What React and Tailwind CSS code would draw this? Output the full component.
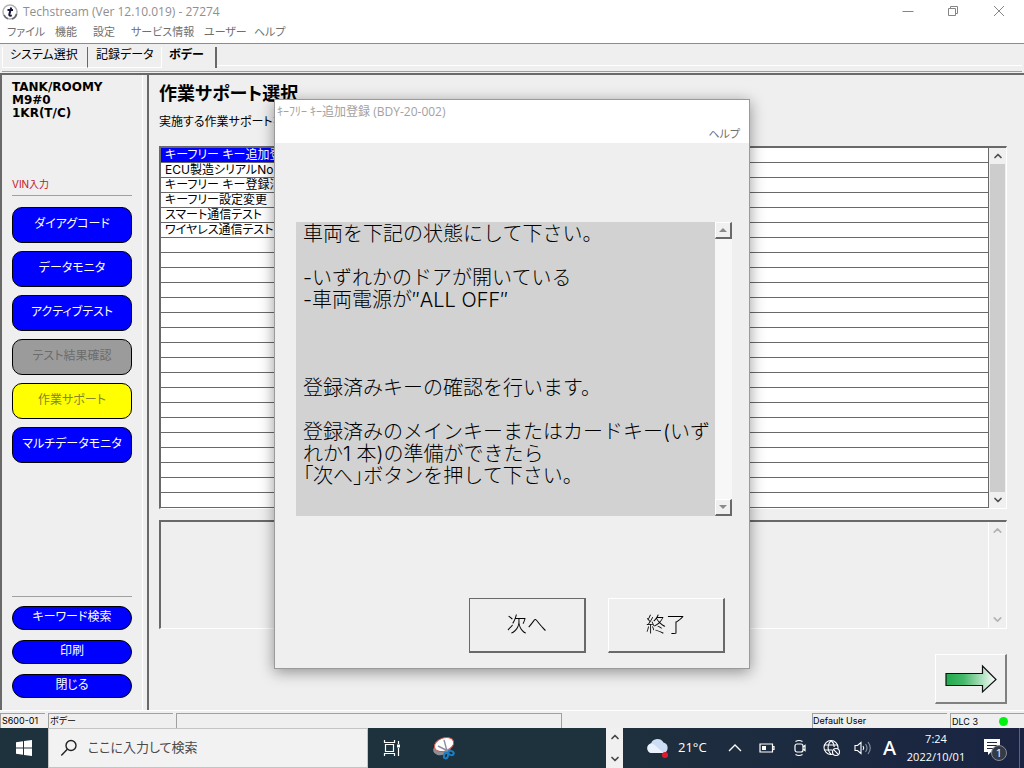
import { ChevronUp, ChevronDown } from "lucide-react";

const menus = [
    { label: "ファイル", width: "w-12" },
    { label: "機能", width: "w-[38px]" },
    { label: "設定", width: "w-[38px]" },
    { label: "サービス情報", width: "w-[73px]" },
    { label: "ユーザー", width: "w-[50px]" },
    { label: "ヘルプ", width: "w-12" },
];

const sideButtons = [
    { label: "ダイアグコード", tone: "blue" },
    { label: "データモニタ", tone: "blue" },
    { label: "アクティブテスト", tone: "blue" },
    { label: "テスト結果確認", tone: "gray" },
    { label: "作業サポート", tone: "yellow" },
    { label: "マルチデータモニタ", tone: "blue" },
];

const footButtons = ["キーワード検索", "印刷", "閉じる"];

const items = [
    "キーフリー キー追加登",
    "ECU製造シリアルNo.読",
    "キーフリー キー登録消",
    "キーフリー設定変更",
    "スマート通信テスト",
    "ワイヤレス通信テスト",
];

const ROW_COUNT = 24;

const message = `車両を下記の状態にして下さい。

-いずれかのドアが開いている
-車両電源が″ALL OFF″



登録済みキーの確認を行います。

登録済みのメインキーまたはカードキー(いず
れか1 本)の準備ができたら
`;

const tones = {
    blue: "bg-[#0000fe] text-white",
    gray: "bg-[#9b9b9b] text-[#6c6c6c]",
    yellow: "bg-[#ffff00] text-[#85852a]",
};

const TitleBar = () => (
    <header className="bg-white border-b border-[#8c8c8c]">
        <div className="flex h-6 items-center pl-[2px] pr-[2px]">
            <svg width="16" height="18" viewBox="0 0 16 18" aria-hidden="true">
                <circle cx="8" cy="9" r="7" fill="#fff" stroke="#b4b4b8" strokeWidth="1.6" />
                <path d="M10 16A7 7 0 0 0 14.600 11M2 12A7 7 0 0 0 6 15.700" fill="none" stroke="#6a6a72" strokeWidth="1.600" />
                <path d="M9.200 4.500 7.300 11.500Q7 13.400 9.800 12.400M5.500 7H11" fill="none" stroke="#16163c" strokeWidth="2" />
            </svg>
            <h1 className="ml-[5px] font-['Open_Sans',sans-serif] text-xs text-[#8f8f8f]">Techstream (Ver 12.10.019) - 27274</h1>
            <div className="ml-auto flex items-center text-[#858585]">
                <button aria-label="最小化" className="flex w-[45px] justify-center">
                    <svg width="12" height="12" viewBox="0 0 12 12" fill="none" stroke="currentColor"><path d="M.5 5.500h11" /></svg>
                </button>
                <button aria-label="元に戻す" className="flex w-[46px] justify-center">
                    <svg width="12" height="12" viewBox="0 0 12 12" fill="none" stroke="currentColor"><path d="M1.500 2.500h7v7h-7zM3.500 2.500v-2h7v7h-2" /></svg>
                </button>
                <button aria-label="閉じる" className="flex w-[46px] justify-center">
                    <svg width="12" height="12" viewBox="0 0 12 12" fill="none" stroke="currentColor"><path d="m1 0 10 10M11 0 1 10" /></svg>
                </button>
            </div>
        </div>
        <nav className="flex h-[19px] items-start pl-[7px] text-[11px] leading-4 text-[#6f6f6f]">
            {menus.map((m) => (
                <button key={m.label} className={`${m.width} whitespace-nowrap text-left`}>{m.label}</button>
            ))}
        </nav>
    </header>
);

const Tabs = () => (
    <div className="h-[31px] border-b-2 border-[#696969] px-[2px]">
        <div className="flex h-[28px] border-b border-[#a0a0a0] text-xs">
            <button className="my-[3px] flex w-[86px] items-start border-b border-l border-r border-b-white border-l-white border-r-[#696969] pl-[7px]">システム選択</button>
            <button className="my-[3px] flex w-[73px] items-start border-b border-b-white pl-2">記録データ</button>
            <button className="my-[3px] flex w-[56px] items-start border-l border-r-2 border-l-white border-r-[#696969] pl-[7px] font-bold">ボデー</button>
            <div className="mb-[5px] grow border-b border-white" />
        </div>
    </div>
);

const Sidebar = () => (
    <aside className="flex w-[143px] shrink-0 flex-col border-r border-l-2 border-r-white border-l-[#696969] px-[10px] pb-3">
        <div className="mt-[6px] font-['DejaVu_Sans',sans-serif] text-xs font-bold leading-[13px]">
            <p>TANK/ROOMY</p>
            <p>M9#0</p>
            <p>1KR(T/C)</p>
        </div>
        <p className="mt-[56px] border-b border-[#a0a0a0] pb-[3px] text-[10px] leading-4 text-[#c4161c]">VIN入力</p>
        <div className="mt-[11px] flex flex-col gap-2">
            {sideButtons.map((b) => (
                <button
                    key={b.label}
                    disabled={b.tone === "gray"}
                    className={`h-9 w-[120px] whitespace-nowrap rounded-[10px] border border-black pb-[3px] text-xs ${tones[b.tone]}`}
                >
                    {b.label}
                </button>
            ))}
        </div>
        <div className="mt-auto flex flex-col gap-[10px] border-t border-[#a0a0a0] pt-[9px]">
            {footButtons.map((label) => (
                <button key={label} className="h-6 w-[120px] rounded-full border border-black bg-[#0000fe] pb-[2px] text-xs leading-5 text-white">
                    {label}
                </button>
            ))}
        </div>
    </aside>
);

const ItemTable = () => (
    <div className="mt-[15px] flex border-b border-l-2 border-r border-t-2 border-b-white border-l-[#696969] border-r-white border-t-[#696969]">
        <table className="grow table-fixed border-separate border-spacing-0 border-r border-[#696969] bg-white text-xs leading-[14px]">
            <tbody>
                {Array.from({ length: ROW_COUNT }, (_, i) => (
                    <tr key={i}>
                        <td className={`h-[15px] w-1/3 whitespace-nowrap border-b border-[#696969] p-0 pl-1 ${i === 0 ? "bg-[#0000fe] text-white" : ""}`}>
                            {items[i]}
                        </td>
                        <td className="border-b border-[#696969] p-0" />
                    </tr>
                ))}
            </tbody>
        </table>
        <div className="flex w-[17px] flex-col items-center bg-[#f0f0f0] px-px text-[#505050]">
            <button aria-label="上へ" className="flex h-4 items-center"><ChevronUp size={12} strokeWidth={3.5} /></button>
            <div className="w-full grow bg-[#cdcdcd]" />
            <button aria-label="下へ" className="flex h-4 items-center"><ChevronDown size={12} strokeWidth={3.5} /></button>
        </div>
    </div>
);

const Main = () => (
    <main className="ml-[4px] flex min-w-0 grow flex-col border-l-2 border-[#696969] pb-[6px] pl-[10px] pr-[17px]">
        <h2 className="mt-[7px] text-lg font-bold leading-6">作業サポート選択</h2>
        <p className="mt-[7px] text-xs leading-[18px]">実施する作業サポートを</p>
        <ItemTable />
        <div className="mt-[11px] flex h-[109px] shrink-0 border-b border-l-2 border-r border-t-2 border-b-white border-l-[#696969] border-r-white border-t-[#696969]">
            <div className="ml-auto flex w-[18px] flex-col items-center justify-between border-l border-white py-[2px] text-[#b4b4b4]">
                <ChevronUp size={13} strokeWidth={3} />
                <ChevronDown size={13} strokeWidth={3} />
            </div>
        </div>
        <button aria-label="次の画面" className="mt-auto flex h-[50px] w-[72px] shrink-0 items-center justify-center self-end border-b-2 border-l border-r-2 border-t border-b-[#808080] border-l-white border-r-[#808080] border-t-white">
            <svg width="52" height="30" viewBox="0 0 52 30">
                <defs>
                    <linearGradient id="arrow">
                        <stop offset="0" stopColor="#1faa4c" />
                        <stop offset=".35" stopColor="#44b96a" />
                        <stop offset="1" stopColor="#fff" />
                    </linearGradient>
                </defs>
                <path d="M1 9.500H37.500V2L51 15.500 37.500 28V21.500H1Z" fill="url(#arrow)" stroke="#111" strokeWidth="1.200" />
            </svg>
        </button>
    </main>
);

const StatusBar = () => (
    <footer className="flex h-[18px] items-end gap-[3px] border-t border-white pt-px text-[9px] leading-[13px] [&>div]:h-[15px] [&>div]:border-l [&>div]:border-t [&>div]:border-[#a0a0a0] [&>div]:whitespace-nowrap">
        <div className="w-[45px] pl-px">S600-01</div>
        <div className="w-[125px] pl-px">ボデー</div>
        <div className="w-[386px] border-r border-r-white" />
        <div className="ml-auto w-[135px]">Default User</div>
        <div className="flex w-[74px] items-center pl-px">
            DLC 3
            <span className="ml-auto mr-4 size-[9px] rounded-full bg-[#00f010]" />
        </div>
    </footer>
);

const Taskbar = () => (
    <div className="flex h-10 shrink-0 bg-[#1e323e] font-['Open_Sans','Noto_Sans_CJK_JP',sans-serif] text-white">
        <button aria-label="スタート" className="flex w-12 items-center justify-center">
            <svg width="16" height="16" viewBox="0 0 16 16" fill="#fff">
                <path d="M0 2.300 7 1.300V7.500H0zM8 1.100 16 0v7.500H8zM0 8.500h7v6.200L0 13.700zM8 8.500h8V16l-8-1.100z" />
            </svg>
        </button>
        <label className="flex w-[320px] items-center border border-[#c4c4c4] bg-[#f2f2f2] pl-[11px]">
            <svg width="18" height="18" viewBox="0 0 18 18" fill="none" stroke="#222" strokeWidth="1.400">
                <circle cx="11" cy="6.500" r="5" />
                <path d="m7.300 10.200-6 6.300" />
            </svg>
            <input
                aria-label="検索"
                placeholder="ここに入力して検索"
                className="ml-[10px] min-w-0 grow bg-transparent text-[13px] outline-none placeholder:text-[#4a4a4a]"
            />
        </label>
        <button aria-label="タスクビュー" className="flex w-12 items-center justify-center">
            <svg width="18" height="16" viewBox="0 0 18 16" fill="none" stroke="#fff" strokeWidth="1.200">
                <path d="M1.500 0v2.500h10V0M1.500 16v-2.500h10V16M2.500 4.500h8v7h-8zM15.500 1v3M15.500 8v8" />
                <path d="M14 4.500h3v3h-3z" fill="#fff" stroke="none" />
            </svg>
        </button>
        <button aria-label="Snipping Tool" className="ml-1 flex w-12 items-center justify-center">
            <svg width="26" height="26" viewBox="0 0 26 26">
                <ellipse cx="11" cy="14" rx="9" ry="6" fill="#8e8f96" transform="rotate(-15 11 14)" />
                <ellipse cx="13" cy="9.500" rx="10" ry="6.500" fill="#fff" stroke="#d9504a" strokeWidth="1" transform="rotate(-20 13 9.500)" />
                <path d="m13 5 3 11M7 11l10 5" stroke="#8b8fa0" strokeWidth="1.400" />
                <g fill="none" stroke="#1c7fc4" strokeWidth="2">
                    <ellipse cx="15" cy="20.500" rx="2" ry="3" transform="rotate(15 15 20.500)" />
                    <ellipse cx="20" cy="18" rx="2.800" ry="2" transform="rotate(20 20 18)" />
                </g>
            </svg>
        </button>
        <div className="ml-auto flex w-[17px] flex-col items-center justify-between bg-[#f0f0f0] py-[3px] text-[#484848]">
            <ChevronUp size={12} strokeWidth={3.5} />
            <ChevronDown size={12} strokeWidth={3.5} />
        </div>
        <div className="flex w-[401px] items-center bg-linear-to-r from-[#1e2f3d] to-[#1a2442]">
            <svg className="ml-[23px]" width="25" height="22" viewBox="0 0 25 22">
                <path d="M5 16a5 5 0 0 1 0-9.500 7 7 0 0 1 12.500-1A5.500 5.500 0 0 1 18 16Z" fill="#cbdcf4" />
                <path d="M5 16a5 5 0 0 1-1-9.300c5-1 7 5 14 9.300Z" fill="#e9f1fd" />
                <circle cx="19" cy="18" r="3" fill="#e01c2c" />
            </svg>
            <span className="ml-[7px] w-[30px] text-[13px]">21°C</span>
            <svg className="ml-5" width="14" height="10" viewBox="0 0 14 10" fill="none" stroke="#fff" strokeWidth="1.300"><path d="m1 8 6-6 6 6" /></svg>
            <svg className="ml-[17px]" width="17" height="12" viewBox="0 0 17 12" fill="none" stroke="#fff" strokeWidth="1.200">
                <path d="M1 2h12.500v8H1zM13.500 4.500H15v3h-1.500" /><path d="M3 4h4v4H3z" fill="#fff" stroke="none" />
            </svg>
            <svg className="ml-[17px]" width="14" height="18" viewBox="0 0 14 18" fill="none" stroke="#fff" strokeWidth="1.200">
                <rect x="2" y="5" width="8" height="8" rx="2" /><path d="M10 8l2-1.500v5L10 10M2.500 2.500q3.500-2 7 0M2.500 15.500q3.500 2 7 0" />
            </svg>
            <svg className="ml-4" width="18" height="18" viewBox="0 0 18 18" fill="none" stroke="#fff" strokeWidth="1.100">
                <circle cx="8" cy="8.500" r="7" />
                <path d="M8 1.500c-4 4-4 10 0 14M8 1.500c2.500 2 3.200 4.500 3.200 6.500M1.500 6h13M1.500 11H9" />
                <circle cx="13" cy="13" r="3.500" fill="#1c2941" /><path d="m10.700 10.700 4.600 4.600" />
            </svg>
            <svg className="ml-[13px]" width="18" height="16" viewBox="0 0 18 16" fill="none" stroke="#fff" strokeWidth="1.100">
                <path d="M1 5.500h2.500L7 2.500v11L3.500 10.500H1zM9 6q1.500 2 0 4" /><path d="M11.500 4q3 4 0 8M14 2q4.500 6 0 12" stroke="#8993a4" />
            </svg>
            <span className="ml-[11px] w-[14px] font-['Noto_Sans',sans-serif] text-xl font-medium">A</span>
            <div className="ml-[8px] w-[62px] text-center text-[11px] leading-[18px]">
                <p>7:24</p>
                <p>2022/10/01</p>
            </div>
            <svg className="ml-auto mr-[11px]" width="26" height="26" viewBox="0 0 26 26">
                <path d="M2 4h16v13H9l-3 3v-3H2z" fill="#fff" />
                <path d="M5 7.500h10M5 10.500h10M5 13.500h6" stroke="#1c2941" />
                <circle cx="17" cy="18" r="7.500" fill="#333b47" stroke="#858b95" />
                <text x="17" y="22" fill="#fff" fontSize="11" textAnchor="middle">1</text>
            </svg>
            <div className="h-full w-[5px] border-l border-[#5b6579]" />
        </div>
    </div>
);

const ScrollButton = ({ label, path }) => (
    <button aria-label={label} className="flex size-[17px] items-center justify-center border-b-2 border-l border-r-2 border-t border-b-[#696969] border-l-white border-r-[#696969] border-t-white bg-[#f0f0f0]">
        <svg width="8" height="4" viewBox="0 0 8 4" fill="#8a8a8a"><path d={path} /></svg>
    </button>
);

const Dialog = () => (
    <div className="pointer-events-none fixed inset-0 flex items-center justify-center">
        <section
            role="dialog"
            aria-label="キー追加登録"
            className="pointer-events-auto w-[476px] border border-[#9a9a9a] bg-[#efefef] shadow-[0_3px_14px_rgba(0,0,0,0.4)]"
        >
            <div className="h-[43px] bg-white px-[2px]">
                <p className="pt-[3px] font-['Open_Sans','Noto_Sans_CJK_JP',sans-serif] text-xs leading-[18px] text-[#a2a2a2]">ｷｰﾌﾘｰ ｷｰ追加登録 (BDY-20-002)</p>
                <div className="flex justify-end pr-[7px] pt-1">
                    <button className="text-[11px] leading-[18px] text-[#6f6f6f]">ヘルプ</button>
                </div>
            </div>
            <div className="pb-[15px] pl-[21px] pr-[17px] pt-[79px]">
                <div className="flex h-[294px]">
                    <p className="grow whitespace-pre bg-[#d2d2d2] pl-[7px] pt-px text-xl font-light leading-[22px] [font-feature-settings:normal]">
                        {message}
                        <span className="[font-feature-settings:'palt']">「次へ」</span>
                        ボタンを押して下さい。
                    </p>
                    <div className="flex w-[17px] flex-col justify-between bg-[#f7f7f7]">
                        <ScrollButton label="上へ" path="M0 4 4 0l4 4z" />
                        <ScrollButton label="下へ" path="M0 0 4 4l4-4z" />
                    </div>
                </div>
                <div className="mt-[82px] flex justify-end gap-[22px] pr-[7px] text-xl font-light">
                    <button className="h-[55px] w-[117px] border border-b-2 border-r-2 border-[#696969]">次へ</button>
                    <button className="h-[55px] w-[117px] border border-b-2 border-r-2 border-b-[#696969] border-l-white border-r-[#696969] border-t-white">終了</button>
                </div>
            </div>
        </section>
    </div>
);

export default function App() {
    return (
        <div className="flex min-h-screen flex-col bg-[#efefef] font-['Inter','Noto_Sans_CJK_JP',sans-serif] text-black [font-feature-settings:'palt']">
            <TitleBar />
            <Tabs />
            <div className="flex grow">
                <Sidebar />
                <Main />
            </div>
            <StatusBar />
            <Taskbar />
            <Dialog />
        </div>
    );
}
